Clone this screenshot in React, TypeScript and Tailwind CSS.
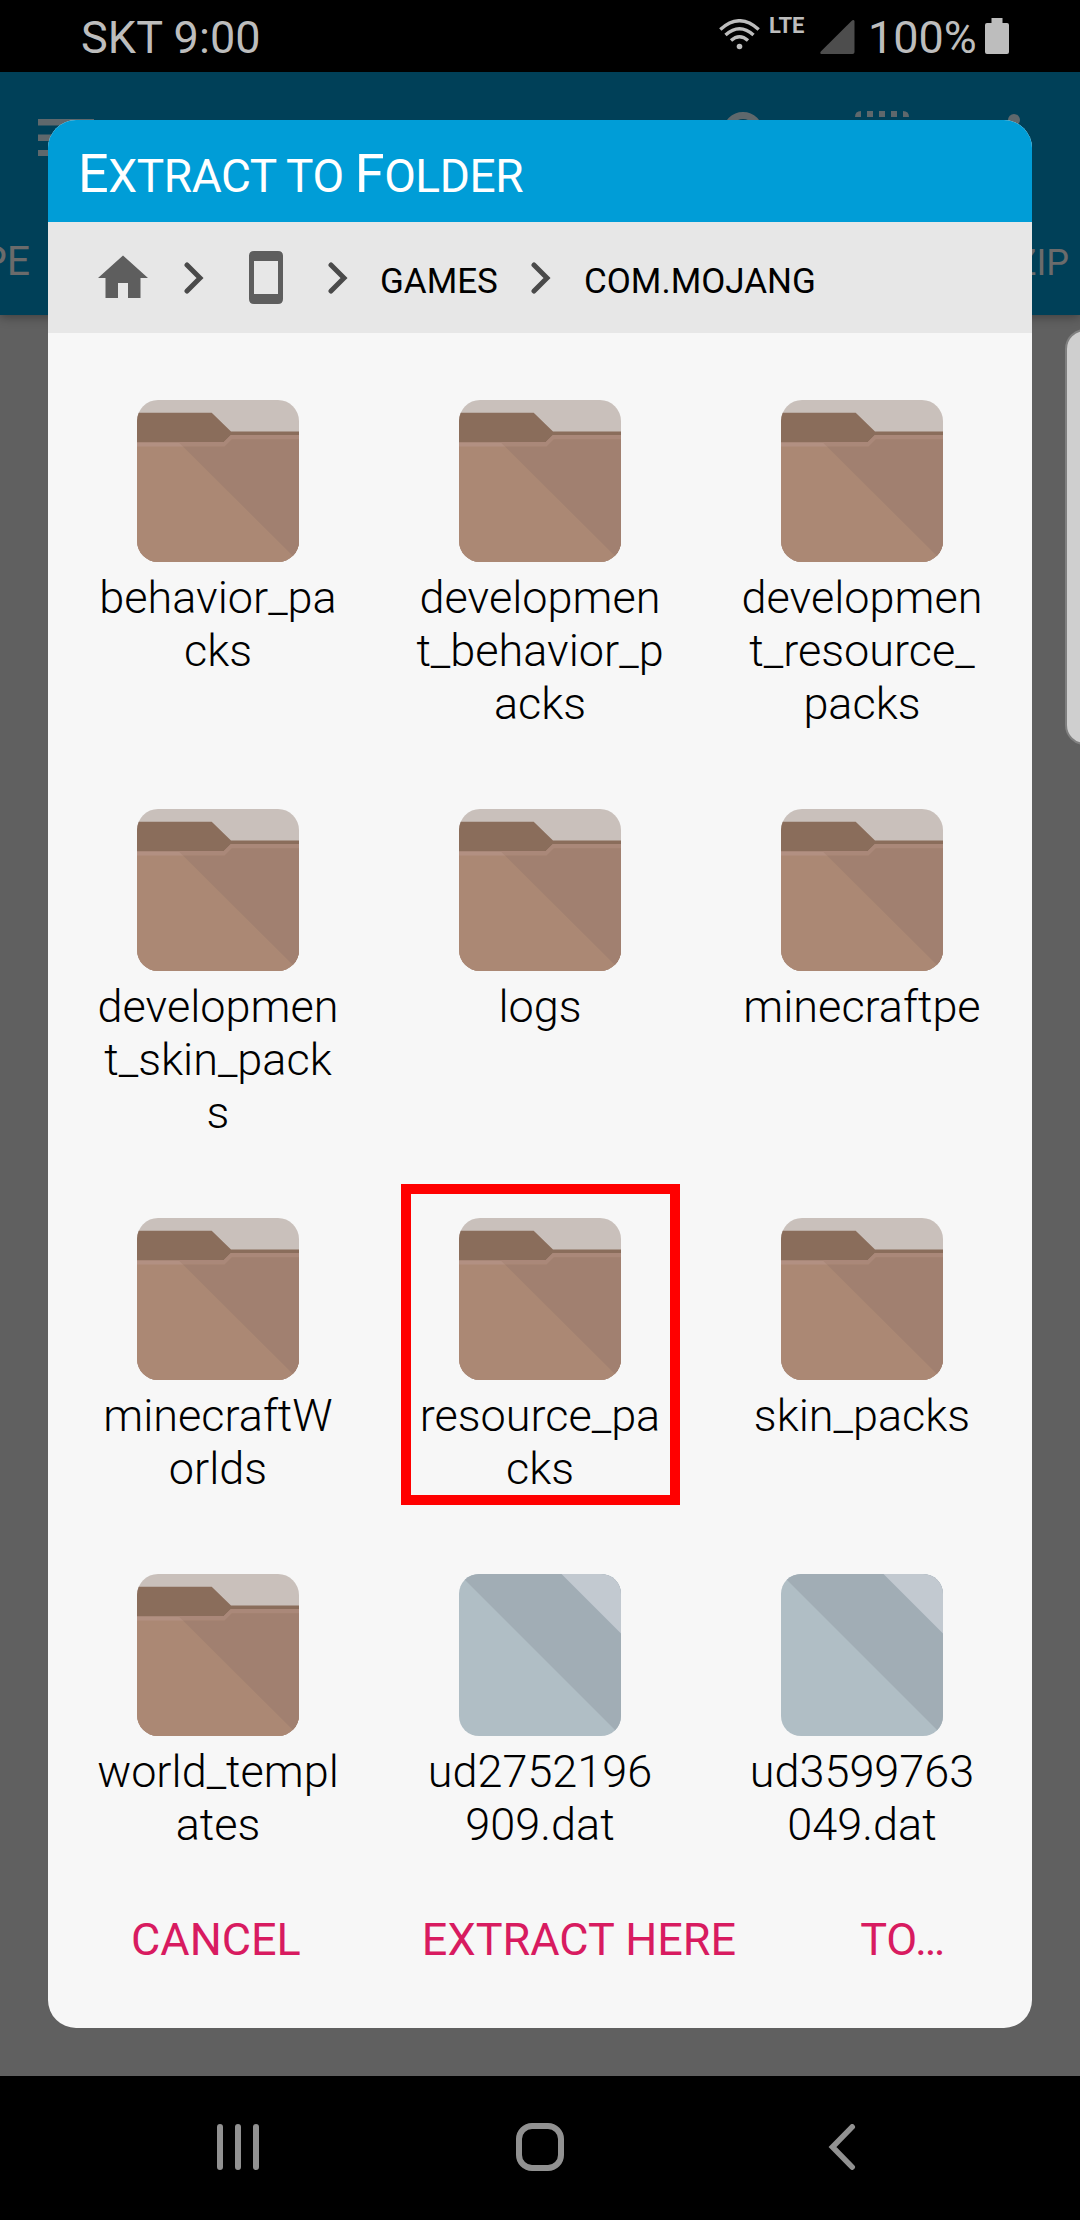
import type { ReactNode } from "react";

type Entry = { lines: string[]; kind: "folder" | "file"; highlighted?: boolean };

const rows: { height: string; entries: Entry[] }[] = [
  {
    height: "h-[409px]",
    entries: [
      { lines: ["behavior_pa", "cks"], kind: "folder" },
      { lines: ["developmen", "t_behavior_p", "acks"], kind: "folder" },
      { lines: ["developmen", "t_resource_", "packs"], kind: "folder" },
    ],
  },
  {
    height: "h-[409px]",
    entries: [
      { lines: ["developmen", "t_skin_pack", "s"], kind: "folder" },
      { lines: ["logs"], kind: "folder" },
      { lines: ["minecraftpe"], kind: "folder" },
    ],
  },
  {
    height: "h-[356px]",
    entries: [
      { lines: ["minecraftW", "orlds"], kind: "folder" },
      { lines: ["resource_pa", "cks"], kind: "folder", highlighted: true },
      { lines: ["skin_packs"], kind: "folder" },
    ],
  },
  {
    height: "h-[300px]",
    entries: [
      { lines: ["world_templ", "ates"], kind: "folder" },
      { lines: ["ud2752196", "909.dat"], kind: "file" },
      { lines: ["ud3599763", "049.dat"], kind: "file" },
    ],
  },
];

function FolderIcon() {
  return (
    <svg viewBox="0 0 162 162" className="block h-[162px] w-[162px] rounded-[21px]">
      <rect width="162" height="162" fill="#c9c0bb" />
      <path d="M0 12.7H74.7L94 31.5H162V60H0Z" fill="#8a6d5b" />
      <path d="M0 42.3H86.7L94 35H162V162H0Z" fill="#b29082" />
      <path d="M41.5 42.3H86.7L94 35H162V162Z" fill="#aa8879" />
      <path d="M0 46.5H87.5L94.8 39.2H162V162H0Z" fill="#ab8874" />
      <path d="M46 46.5H87.5L94.8 39.2H162V162Z" fill="#a18070" />
    </svg>
  );
}

function FileIcon() {
  return (
    <svg viewBox="0 0 162 162" className="block h-[162px] w-[162px] rounded-[20px]">
      <rect width="162" height="162" fill="#b0bec5" />
      <path d="M0 0H162V162Z" fill="#a1adb5" />
      <path d="M102.5 0H162V59.5Z" fill="#c2c9d0" />
    </svg>
  );
}

function Chevron() {
  return (
    <svg viewBox="0 0 20 32" className="h-8 w-5 shrink-0" fill="none" stroke="#4a4a4a" strokeWidth="5" strokeLinecap="round">
      <path d="M3 3L16 16L3 29" />
    </svg>
  );
}

function EntryTile({ entry }: { entry: Entry }) {
  return (
    <div className="relative flex flex-col items-center">
      {entry.kind === "folder" ? <FolderIcon /> : <FileIcon />}
      <div className="mt-[9px] text-center text-[45px] leading-[53px] font-light text-black">
        {entry.lines.map((line) => (
          <div key={line} className="whitespace-nowrap">{line}</div>
        ))}
      </div>
      {entry.highlighted && (
        <div className="absolute -top-[34px] left-[22px] h-[321px] w-[279px] border-[10px] border-[#ff0000]" />
      )}
    </div>
  );
}

function StatusBar() {
  return (
    <div className="flex h-[72px] items-start bg-black text-[#bdbdbd]">
      <div className="ml-[81px] pt-[11px] text-[45px] leading-[53px] tracking-[0.1px]">SKT 9:00</div>
      <svg viewBox="0 0 41 31" className="mt-[19px] ml-auto h-[31px] w-[41px]" fill="none" stroke="#bdbdbd" strokeWidth="3.4">
        <path d="M1.3 10.5Q20.5 -7 39.7 10.5" />
        <path d="M6.5 16Q20.5 3.4 34.5 16" />
        <path d="M12 21.5Q20.5 14 29 21.5" />
        <circle cx="20.5" cy="27.5" r="2.8" fill="#bdbdbd" stroke="none" />
      </svg>
      <div className="mt-[13px] ml-[9px] w-[36px] text-[22px] leading-[26px] font-bold">LTE</div>
      <svg viewBox="0 0 35 34" className="mt-5 ml-[15px] h-[34px] w-[35px]">
        <path d="M34.5 1V32Q34.5 34 32.5 34H1.5Q-.5 33.5 .8 31.6L31.5 1Q33.5 -.8 34.5 1Z" fill="#4d4d4d" />
      </svg>
      <div className="ml-[13px] w-[108px] pt-[11px] text-[45px] leading-[53px] whitespace-nowrap">100%</div>
      <svg viewBox="0 0 24 36" className="mt-[18px] mr-[71px] ml-[9px] h-9 w-6">
        <path d="M6.500 0H17.500V5H22Q24 5 24 7V34Q24 36 22 36H2Q0 36 0 34V7Q0 5 2 5H6.500Z" fill="#bdbdbd" />
      </svg>
    </div>
  );
}

function AppBehind() {
  return (
    <div className="relative h-[2004px] overflow-hidden bg-[#606060]">
      <div className="flex h-[243px] flex-col bg-[#004058] shadow-[0_2px_10px_rgba(0,0,0,0.35)]">
        <div className="flex h-[120px] items-start">
          <svg viewBox="0 0 56 37" className="mt-[47px] ml-[38px] h-[37px] w-14" fill="#5f686c">
            <path d="M0 0H56V6.500H0ZM0 15.500H56V22H0ZM0 31H56V37H0Z" />
          </svg>
          <svg viewBox="0 0 54 54" className="mt-10 ml-auto h-[54px] w-[54px]" fill="none" stroke="#5f686c" strokeWidth="7">
            <circle cx="20" cy="20" r="16.500" />
            <path d="M32 32L50 50" />
          </svg>
          <svg viewBox="0 0 54 54" className="mt-[39px] ml-[78px] h-[54px] w-[54px]" fill="#5f686c">
            <path d="M0 6Q0 0 6 0V6ZM12 0H18V6H12ZM24 0H30V6H24ZM36 0H42V6H36ZM48 0Q54 0 54 6H48Z" />
          </svg>
          <svg viewBox="0 0 12 44" className="mt-[42px] mr-[60px] ml-[99px] h-11 w-3" fill="#5f686c">
            <circle cx="6" cy="6" r="6" />
            <circle cx="6" cy="22" r="6" />
            <circle cx="6" cy="38" r="6" />
          </svg>
        </div>
        <div className="flex items-baseline justify-between pt-[45px] text-[#6b6b6b]">
          <div className="-ml-[19px] text-[41px] leading-[48px]">PE</div>
          <div className="mr-[11px] text-[36px] leading-[48px]">ZIP</div>
        </div>
      </div>
      <div className="absolute top-[257px] -right-5 h-[416px] w-[35px] rounded-l-[20px] border-2 border-[#808080] bg-[#cfcfcf]" />
    </div>
  );
}

function NavBar() {
  return (
    <div className="flex h-36 items-start bg-black pt-[47px]">
      <svg viewBox="0 0 42 46" className="mt-px ml-[217px] h-[46px] w-[42px]" stroke="#919191" strokeWidth="6" strokeLinecap="round">
        <path d="M3 3V43M21 3V43M39 3V43" />
      </svg>
      <div className="ml-[257px] h-12 w-12 rounded-[16px] border-6 border-[#919191]" />
      <svg viewBox="0 0 28 46" className="mt-px ml-[264px] h-[46px] w-7" fill="none" stroke="#919191" strokeWidth="5.600" strokeLinecap="round">
        <path d="M24.200 2.900L4.500 23L24.200 43.100" />
      </svg>
    </div>
  );
}

function Action({ className, children }: { className: string; children: ReactNode }) {
  return <button className={`text-[45px] leading-[53px] whitespace-nowrap text-[#d81b60] ${className}`}>{children}</button>;
}

function ExtractDialog() {
  return (
    <div className="absolute top-[120px] left-12 flex h-[1908px] w-[984px] flex-col overflow-hidden rounded-[28px] bg-[#f7f7f7]">
      <div className="flex h-[102px] items-baseline bg-[#009dd7] pt-[22px] pl-[30px] text-[46px] leading-[63px] text-white">
        <h1 className="tracking-[-0.42px] whitespace-pre">
          <span className="text-[54px]">E</span>XTRACT TO <span className="text-[54px]">F</span>OLDER
        </h1>
      </div>
      <div className="flex h-[111px] items-center bg-[#e7e7e7] text-[35px] text-black">
        <svg viewBox="0 0 24 24" className="ml-[45px] h-[60px] w-[60px]" fill="#5e5e5e">
          <path d="M10 20v-6h4v6h5v-8h3L12 3 2 12h3v8z" />
        </svg>
        <div className="ml-[31px]"><Chevron /></div>
        <svg viewBox="0 0 34 53" className="ml-[45px] h-[53px] w-[34px]">
          <path fillRule="evenodd" d="M5 0H29Q34 0 34 5V48Q34 53 29 53H5Q0 53 0 48V5Q0 0 5 0ZM5 10V43H29V10Z" fill="#5e5e5e" />
        </svg>
        <div className="ml-[45px]"><Chevron /></div>
        <div className="ml-8 w-[120px] pt-2 leading-[42px]">GAMES</div>
        <div className="ml-[31px]"><Chevron /></div>
        <div className="ml-[33px] pt-2 leading-[42px]">COM.MOJANG</div>
      </div>
      <div className="flex flex-col px-[9px] pt-[67px]">
        {rows.map((row, i) => (
          <div key={i} className={`grid grid-cols-3 ${row.height}`}>
            {row.entries.map((entry) => (
              <EntryTile key={entry.lines.join("")} entry={entry} />
            ))}
          </div>
        ))}
      </div>
      <div className="flex pt-[39px]">
        <Action className="ml-[83px]">CANCEL</Action>
        <Action className="ml-[121px]">EXTRACT HERE</Action>
        <Action className="ml-[124px]">TO…</Action>
      </div>
    </div>
  );
}

export default function App() {
  return (
    <div className="relative h-[2220px] w-[1080px] overflow-hidden bg-black font-['Roboto',sans-serif]">
      <StatusBar />
      <AppBehind />
      <NavBar />
      <ExtractDialog />
    </div>
  );
}
